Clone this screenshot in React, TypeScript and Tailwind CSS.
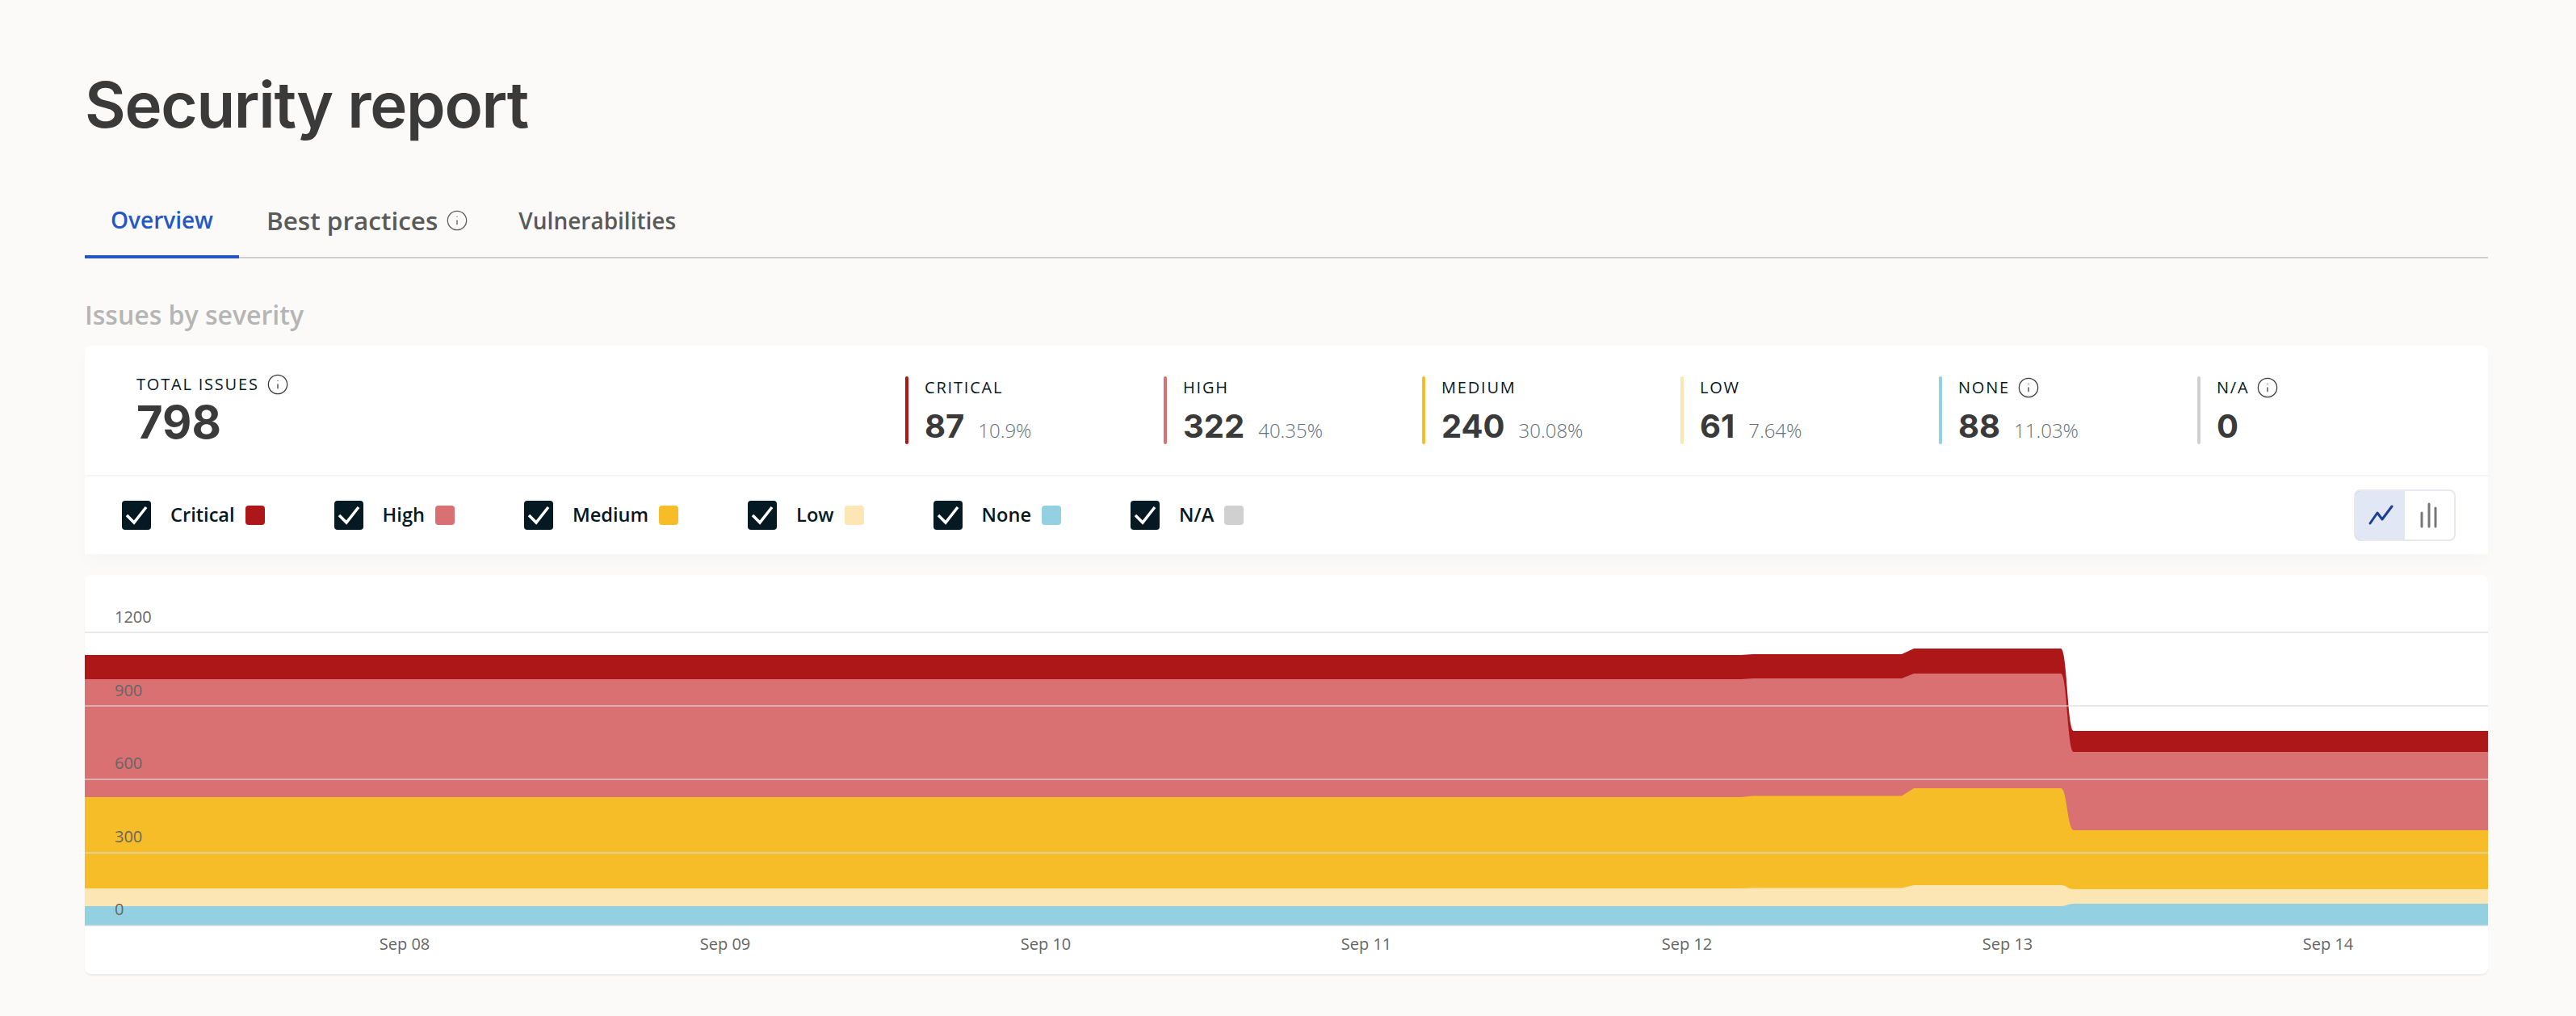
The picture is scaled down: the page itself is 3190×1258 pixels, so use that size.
import { Info } from 'lucide-react';

const stats = [
  { label: 'CRITICAL', value: '87', pct: '10.9%', bar: 'bg-[#ad1718]' },
  { label: 'HIGH', value: '322', pct: '40.35%', bar: 'bg-[#d97072]' },
  { label: 'MEDIUM', value: '240', pct: '30.08%', bar: 'bg-[#f7bd28]' },
  { label: 'LOW', value: '61', pct: '7.64%', bar: 'bg-[#fce6b4]' },
  { label: 'NONE', value: '88', pct: '11.03%', bar: 'bg-[#93d0e2]', info: true },
  { label: 'N/A', value: '0', pct: '', bar: 'bg-[#d0d0d0]', info: true },
];

const legend = [
  { label: 'Critical', swatch: 'bg-[#ad1718]' },
  { label: 'High', swatch: 'bg-[#d97072]' },
  { label: 'Medium', swatch: 'bg-[#f7bd28]' },
  { label: 'Low', swatch: 'bg-[#fce6b4]' },
  { label: 'None', swatch: 'bg-[#93d0e2]' },
  { label: 'N/A', swatch: 'bg-[#d0d0d0]' },
];

// top edge of each stacked band, in svg coords, for the four plateaus
const bands = [
  { fill: '#ad1718', ys: [99, 98, 91, 193] },
  { fill: '#d97072', ys: [129, 128, 122, 219] },
  { fill: '#f7bd28', ys: [275, 273.5, 264, 316] },
  { fill: '#fce6b4', ys: [388, 387.5, 384, 389] },
  { fill: '#93d0e2', ys: [410, 410, 410, 407] },
];

const ticks = [
  { label: '1200', line: 71, text: 52 },
  { label: '900', line: 162, text: 143 },
  { label: '600', line: 253, text: 233 },
  { label: '300', line: 344, text: 324 },
  { label: '0', line: 434, text: 414 },
];

const days = ['Sep 08', 'Sep 09', 'Sep 10', 'Sep 11', 'Sep 12', 'Sep 13', 'Sep 14'];

function bandPath(ys: number[]) {
  const [a, b, c, d] = ys;
  return [
    `M0 ${a}`,
    `L2051 ${a}`,
    `L2066 ${b}`,
    `L2250 ${b}`,
    `L2265 ${c}`,
    `L2447 ${c}`,
    `C2455 ${c} 2455 ${d} 2463 ${d}`,
    `L2976 ${d}`,
    'L2976 434 L0 434 Z',
  ].join(' ');
}

function AreaChart() {
  return (
    <svg width="2976" height="494" viewBox="0 0 2976 494" className="block font-['Open_Sans',sans-serif]">
      {bands.map(b => (
        <path key={b.fill} d={bandPath(b.ys)} fill={b.fill} />
      ))}
      {ticks.map(t => (
        <line key={t.label} x1="0" x2="2976" y1={t.line} y2={t.line} stroke="#d9d9d9" strokeOpacity="0.6" strokeWidth="2" />
      ))}
      {ticks.map(t => (
        <text key={t.label} x="37" y={t.text + 7} fontSize="20" fill="#666666">
          {t.label}
        </text>
      ))}
      {days.map((d, i) => (
        <text key={d} x={396 + i * 397} y="464" fontSize="20" fill="#666666" textAnchor="middle">
          {d}
        </text>
      ))}
    </svg>
  );
}

function Check() {
  return (
    <span className="flex h-9 w-9 items-center justify-center rounded-[4px] bg-[#051922]">
      <svg width="36" height="36" viewBox="0 0 36 36" fill="none">
        <path d="M6 18 L15 27 L30 8" stroke="#ffffff" strokeWidth="3.5" strokeLinejoin="miter" />
      </svg>
    </span>
  );
}

export default function App() {
  return (
    <div className="min-h-screen w-full bg-[#fbfaf8] pl-[105px] pr-[109px] font-['Open_Sans',sans-serif]">
      <h1 className="pt-[83px] font-['Inter',sans-serif] text-[78px] font-semibold leading-[94px] tracking-[-1.3px] text-[#3a3a3a]">
        Security report
      </h1>

      <div className="mt-[51px] flex h-[92px] items-stretch gap-[34px] border-b-2 border-[#cfcfcf]">
        <div className="mb-[-2px] flex items-center border-b-4 border-[#2257c4] px-8 text-[28px] font-semibold text-[#2257c4]">
          Overview
        </div>
        <div className="flex items-center gap-[10px] text-[31.5px] font-semibold text-[#5a5a5a]">
          Best practices
          <Info size={28} strokeWidth={1.1} />
        </div>
        <div className="ml-[28px] flex items-center text-[28px] font-semibold text-[#5a5a5a]">
          Vulnerabilities
        </div>
      </div>

      <h2 className="mt-[48px] text-[32px] font-semibold leading-[44px] text-[#b5b5b5]">Issues by severity</h2>

      <div className="mt-[16px] rounded-t-[8px] bg-white shadow-[0_10px_20px_rgba(0,0,0,0.02)]">
        <div className="flex h-[162px] items-center justify-between border-b-2 border-[#f4f4f4] pl-[64px] pr-[40px]">
          <div className="-mt-[3px] text-[#051922]">
            <div className="flex items-center gap-[9px] text-[20px] leading-[28px] tracking-[1.8px]">
              TOTAL ISSUES
              <Info size={28} strokeWidth={1.1} className="text-[#3a3a3a]" />
            </div>
            <div className="mt-[5px] font-['Inter',sans-serif] text-[56px] font-bold leading-[56px] text-[#3a3a3a]">798</div>
          </div>
          <div className="flex">
            {stats.map(s => (
              <div key={s.label} className="flex h-[84px] w-[320px] gap-[20px]">
                <span className={`w-1 rounded-full ${s.bar}`} />
                <div>
                  <div className="flex h-[28px] items-center gap-[9px] text-[20px] tracking-[1.8px] text-[#051922]">
                    {s.label}
                    {s.info && <Info size={28} strokeWidth={1.1} className="text-[#3a3a3a]" />}
                  </div>
                  <div className="mt-[12px] flex items-baseline gap-[17px]">
                    <span className="font-['Inter',sans-serif] text-[40px] font-bold leading-[44px] text-[#3a3a3a]">
                      {s.value}
                    </span>
                    {s.pct && <span className="text-[24px] font-light text-[#667076]">{s.pct}</span>}
                  </div>
                </div>
              </div>
            ))}
          </div>
        </div>

        <div className="flex h-[96px] items-center justify-between pl-[46px] pr-[40px]">
          <div className="flex items-center gap-[86px]">
            {legend.map(l => (
              <div key={l.label} className="flex items-center">
                <Check />
                <span className="ml-[24px] text-[23.6px] font-semibold text-[#051922]">{l.label}</span>
                <span className={`ml-[13px] h-6 w-6 rounded-[4px] ${l.swatch}`} />
              </div>
            ))}
          </div>
          <div className="flex h-16 w-[126px] overflow-hidden rounded-[8px] border-2 border-[#e8e9ee]">
            <div className="-m-[2px] flex w-[63px] items-center justify-center rounded-l-[8px] border-2 border-r-0 border-[#7a9fe8] bg-[#e1e7f5]">
              <svg width="32" height="28" viewBox="0 0 32 28" fill="none">
                <path d="M3 24 L12 11 L18 19 L30 3" stroke="#1a3f94" strokeWidth="3" strokeLinecap="round" strokeLinejoin="round" />
              </svg>
            </div>
            <div className="flex flex-1 items-center justify-center">
              <svg width="26" height="32" viewBox="0 0 26 32" fill="none">
                <path d="M4 30 V13 M13 30 V2 M21 30 V7" stroke="#777777" strokeWidth="3" strokeLinecap="round" />
              </svg>
            </div>
          </div>
        </div>
      </div>

      <div className="mt-[26px] h-[494px] overflow-hidden rounded-[8px] bg-white shadow-[0_2px_2px_rgba(0,0,0,0.06)]">
        <AreaChart />
      </div>
    </div>
  );
}
